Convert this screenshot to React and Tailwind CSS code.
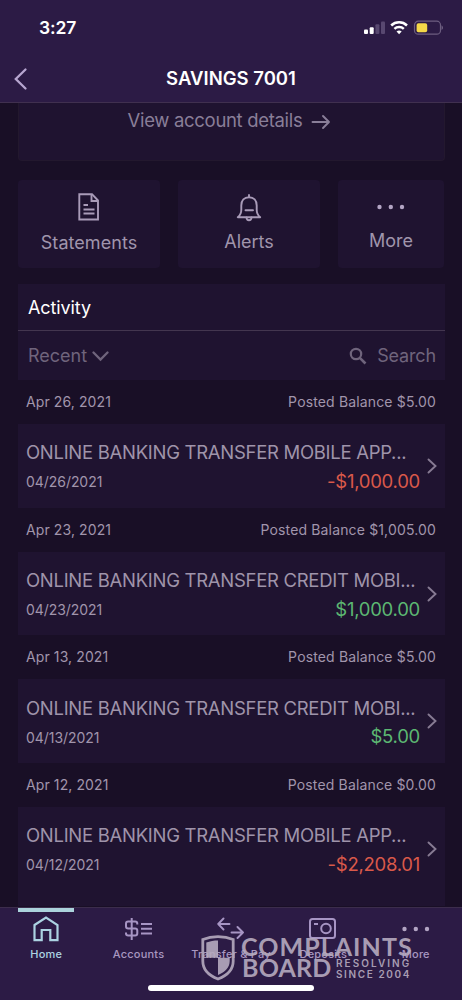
import React from "react";

const transactions = [
  { day: "Apr 26, 2021", balance: "$5.00", title: "ONLINE BANKING TRANSFER MOBILE APP...", date: "04/26/2021", amount: "-$1,000.00", color: "text-[#d9594a]" },
  { day: "Apr 23, 2021", balance: "$1,005.00", title: "ONLINE BANKING TRANSFER CREDIT MOBI...", date: "04/23/2021", amount: "$1,000.00", color: "text-[#5cb772]" },
  { day: "Apr 13, 2021", balance: "$5.00", title: "ONLINE BANKING TRANSFER CREDIT MOBI...", date: "04/13/2021", amount: "$5.00", color: "text-[#5cb772]" },
  { day: "Apr 12, 2021", balance: "$0.00", title: "ONLINE BANKING TRANSFER MOBILE APP...", date: "04/12/2021", amount: "-$2,208.01", color: "text-[#d9594a]" },
];

function StatusIcons() {
  return (
    <svg width="80" height="16" viewBox="0 0 80 16" fill="none">
      <rect x="1" y="9.5" width="4" height="4.5" rx="1" fill="#fff" />
      <rect x="6.7" y="7.2" width="4" height="6.8" rx="1" fill="#fff" />
      <rect x="12.4" y="4.2" width="4" height="9.8" rx="1" fill="#584870" />
      <rect x="18" y="1.5" width="4" height="12.5" rx="1" fill="#584870" />
      <g stroke="#fff" strokeWidth="2.5">
        <path d="M28.200 5.500a11.500 11.500 0 0 1 15.800 0" />
        <path d="M31.400 8.900a7 7 0 0 1 9.400 0" />
      </g>
      <path d="M36.100 14.200l-2.600-2.600a3.800 3.800 0 0 1 5.200 0z" fill="#fff" />
      <rect x="51.500" y="1.200" width="26" height="13" rx="3.800" stroke="#6d5e80" strokeWidth="1.200" />
      <rect x="53.600" y="3.200" width="10.600" height="9" rx="1.800" fill="#f4d848" />
      <path d="M78.500 5.500c2 .7 2 3.700 0 4.400z" fill="#6d5e80" />
    </svg>
  );
}

function DocumentIcon() {
  return (
    <svg width="22" height="28" viewBox="0 0 22 28" fill="none" stroke="#a99bb8" strokeWidth="1.900">
      <path d="M1.300 1.200H14l6 6.300V26.500H1.300z" />
      <path d="M13.500 1.200V8H20" />
      <path d="M5.500 12H10M5.500 16.500H16.500M5.500 20.500H16.500" />
    </svg>
  );
}

function BellIcon() {
  return (
    <svg width="26" height="28" viewBox="0 0 26 28" fill="none" stroke="#a99bb8" strokeWidth="1.900" strokeLinejoin="round" strokeLinecap="round">
      <path d="M13 1v2.200M1.800 23.200h22.400c-2.500-2-3.500-4-3.500-7.500v-4.200c0-5-3-8.300-7.700-8.300s-7.700 3.300-7.700 8.300v4.200c0 3.500-1 5.500-3.500 7.500z" />
      <path d="M10.500 23.500c.2 3.700 4.800 3.700 5 0M9.500 16.300h7.500" />
    </svg>
  );
}

function Dots() {
  return (
    <svg width="30" height="6" viewBox="0 0 30 6" fill="#b3a5c4">
      <circle cx="3.500" cy="3" r="2.200" />
      <circle cx="14.800" cy="3" r="2.200" />
      <circle cx="26" cy="3" r="2.200" />
    </svg>
  );
}

function Header() {
  return (
    <header className="flex h-[103px] flex-none flex-col border-b border-[#40304f] bg-[#2c1b45] text-white">
      <div className="flex h-[55px] items-center justify-between pl-[39px] pr-[19px]">
        <span className="text-[17.5px] font-semibold leading-none tracking-[-0.1px]">3:27</span>
        <StatusIcons />
      </div>
      <div className="grid h-[47px] grid-cols-[60px_1fr_60px] items-center">
        <svg className="ml-[13px]" width="16" height="24" viewBox="0 0 16 24" fill="none" stroke="#b7a6d0" strokeWidth="2.300" strokeLinecap="round">
          <path d="M12.500 2.500L2.800 12l9.700 9.500" />
        </svg>
        <h1 className="text-center text-[18.500px] font-semibold leading-none tracking-[0.010px]">SAVINGS 7001</h1>
      </div>
    </header>
  );
}

function Transaction({ item }) {
  return (
    <section className="group">
      <div className="flex h-[44px] items-center justify-between pb-px pl-2 pr-[9px] text-[14px] text-[#a195ac]">
        <span className="tracking-[0.1px]">{item.day}</span>
        <span className="tracking-[0.150px]">Posted Balance {item.balance}</span>
      </div>
      <div className="h-[83.7px] bg-[#1f1330] pl-2 pr-[7px] group-last:h-[99px]">
        <div className="flex h-[83.7px] items-center">
          <div className="flex min-w-0 flex-1 flex-col pt-[4px]">
            <div className="whitespace-nowrap text-[18.500px] leading-[28px] tracking-[-0.290px] text-[#9f94aa]">{item.title}</div>
            <div className="flex h-[31px] items-center justify-between pr-[6px]">
              <span className="text-[14px] tracking-[-0.050px] text-[#a195ac]">{item.date}</span>
              <span className={"text-[18.500px] tracking-[-0.260px] " + item.color}>{item.amount}</span>
            </div>
          </div>
          <svg width="12" height="18" viewBox="0 0 12 18" fill="none" stroke="#877b93" strokeWidth="1.900" strokeLinecap="round">
            <path d="M2.500 2.500L9.500 9l-7 6.500" />
          </svg>
        </div>
      </div>
    </section>
  );
}

function NavItem({ label, active, children }) {
  return (
    <div className="flex flex-col items-center">
      <div className={"h-[4px] w-[56px] " + (active ? "bg-[#acd3dc]" : "")} />
      <div className="flex h-[34px] items-center">{children}</div>
      <span className={"-mt-px whitespace-nowrap text-[11px] font-medium leading-[18px] tracking-[0.200px] " + (active ? "text-[#acd3e2]" : "text-[#a897c0]")}>{label}</span>
    </div>
  );
}

function Watermark() {
  return (
    <div className="absolute left-[200px] top-[27px] flex text-[#b6abbf] opacity-90">
      <svg width="36" height="46" viewBox="0 0 36 46">
        <path d="M2.800 4.500C12 .7 24 .7 33.200 4.500V26c0 9-6 14.500-15.200 18C8.800 40.500 2.800 35 2.800 26z" fill="none" stroke="currentColor" strokeWidth="2.800" />
        <path d="M18 5.500V22.700H6.300V7.600C10 6.100 14 5.500 18 5.500zM18 22.700H29.700V26c0 6.500-4.500 11-11.700 14z" fill="currentColor" />
      </svg>
      <div className="ml-[5px] flex flex-col font-['Lato'] font-bold">
        <span className="h-[22px] text-[25px] leading-[22px] tracking-[1.050px]">COMPLAINTS</span>
        <div className="flex">
          <span className="ml-px w-[94px] text-[25px] leading-[21px] tracking-[0.200px]">BOARD</span>
          <div className="flex flex-col pt-px font-['Inter'] text-[10px] font-semibold leading-[10.500px]">
            <span className="tracking-[2.050px]">RESOLVING</span>
            <span className="tracking-[1.600px]">SINCE 2004</span>
          </div>
        </div>
      </div>
    </div>
  );
}

export default function App() {
  return (
    <div className="flex h-[1000px] w-[462px] flex-col overflow-hidden bg-[#190f26] font-['Inter',sans-serif]">
      <Header />
      <main className="flex h-[804px] flex-none flex-col overflow-hidden pl-[18px] pr-[17px]">
        <div className="flex h-[58px] flex-none justify-center gap-[9px] rounded-b border border-t-0 border-[#23182e] bg-[#1f1330] pr-[4px] pt-[4px] text-[#897e98]">
          <span className="text-[18.500px] leading-[26px] tracking-[-0.320px]">View account details</span>
          <svg className="mt-[6px]" width="20" height="18" viewBox="0 0 20 18" fill="none" stroke="currentColor" strokeWidth="1.900" strokeLinecap="round" strokeLinejoin="round">
            <path d="M1.500 9H18M12 3l6 6-6 6" />
          </svg>
        </div>
        <div className="mt-[19px] grid h-[88px] flex-none grid-cols-[142px_142px_106px] gap-[18px] text-[18px] leading-[24px] text-[#a095ac]">
          <div className="flex flex-col items-center rounded bg-[#1f1330] pt-[13px]">
            <DocumentIcon />
            <span className="mt-[10px] tracking-[0.050px]">Statements</span>
          </div>
          <div className="flex flex-col items-center rounded bg-[#1f1330] pt-[14px]">
            <BellIcon />
            <span className="mt-[8px]">Alerts</span>
          </div>
          <div className="flex flex-col items-center rounded bg-[#1f1330] pt-[24px]">
            <Dots />
            <span className="mt-[19px]">More</span>
          </div>
        </div>
        <div className="mt-[16px] h-[96px] flex-none bg-[#1f1330]">
          <div className="flex h-[47px] items-center border-b border-[#43364f] pl-[10px] text-[18px] tracking-[-0.100px] text-white">Activity</div>
          <div className="flex h-[49px] items-center pl-[10px] pr-[9px] text-[18px] text-[#6f647c]">
            <span>Recent</span>
            <svg className="ml-[5px]" width="17" height="12" viewBox="0 0 17 12" fill="none" stroke="currentColor" strokeWidth="2.300" strokeLinecap="round">
              <path d="M1.500 2.500l7 7 7-7" />
            </svg>
            <svg className="ml-auto mr-[10px]" width="18" height="18" viewBox="0 0 18 18" fill="none" stroke="currentColor" strokeWidth="2.200">
              <circle cx="7" cy="7" r="5.200" />
              <path d="M10.800 10.800l5.700 5.700" strokeWidth="2.600" />
            </svg>
            <span className="tracking-[-0.150px]">Search</span>
          </div>
        </div>
        <div className="flex-none">
          {transactions.map((item) => <Transaction key={item.day} item={item} />)}
        </div>
      </main>
      <nav className="relative flex h-[93px] flex-none flex-col border-t border-[#3c2d4c] bg-[#2c1b45]">
        <div className="grid flex-1 grid-cols-5">
          <NavItem label="Home" active>
            <svg width="28" height="28" viewBox="0 0 28 28" fill="none" stroke="#acd3e2" strokeWidth="2.200">
              <path d="M2.500 10L14 2.500 25.500 10v15.200h-7.200V15H9.700v10.200H2.500z" />
            </svg>
          </NavItem>
          <NavItem label="Accounts">
            <svg width="28" height="24" viewBox="0 0 28 24" fill="none" stroke="#a795c4" strokeWidth="2">
              <path d="M12.300 7.500V6.700c0-1.300-1-2.200-2.200-2.200H3.200C1.900 4.500 1 5.400 1 6.700v2.600c0 1.300.9 2.200 2.200 2.200h6.900c1.300 0 2.200.9 2.200 2.200v2.600c0 1.300-.9 2.200-2.200 2.200H3.200c-1.300 0-2.200-.9-2.200-2.200v-.8M6.700 1v22M16 7H27M16 11.800H27M16 16.600H27" />
            </svg>
          </NavItem>
          <NavItem label="Transfer &amp; Pay">
            <svg width="28" height="24" viewBox="0 0 28 24" fill="none" stroke="#a795c4" strokeWidth="1.900" strokeLinecap="round" strokeLinejoin="round">
              <path d="M12.500 7H1.200M6.500 1.500L1.200 7 6.500 12.500M14.500 15.500H26M20.500 10l5.500 5.500L20.500 21" />
            </svg>
          </NavItem>
          <NavItem label="Deposits">
            <svg width="28" height="24" viewBox="0 0 28 24" fill="none" stroke="#a795c4" strokeWidth="2">
              <rect x="1" y="2" width="25" height="19" rx="2.500" />
              <circle cx="17" cy="11.500" r="4.800" />
              <path d="M5 7h4" />
            </svg>
          </NavItem>
          <NavItem label="More">
            <Dots />
          </NavItem>
        </div>
        <Watermark />
        <div className="absolute left-[148px] top-[77px] h-[6px] w-[166px] rounded-full bg-white" />
      </nav>
    </div>
  );
}
